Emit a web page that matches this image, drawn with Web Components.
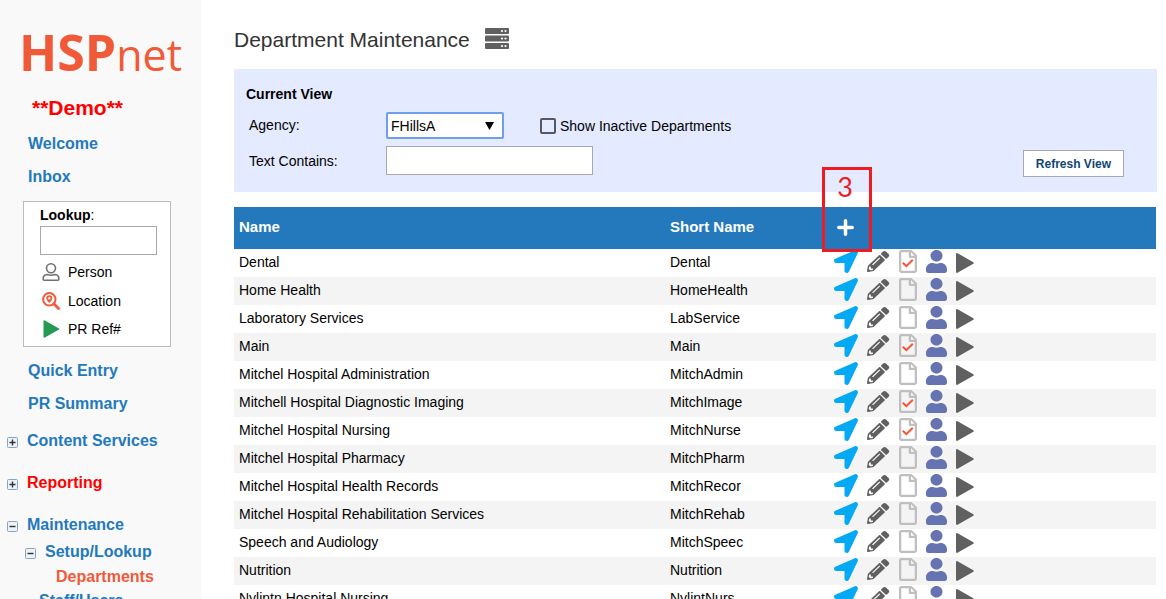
<!DOCTYPE html>
<html lang="en">
<head>
<meta charset="utf-8">
<title>Department Maintenance</title>
<style>
  body { margin: 0; font: 14px/20px "Liberation Sans", Arial, sans-serif; color: #000; background: #fff; }
</style>
</head>
<body>
<hsp-shell>
  <hsp-sidebar slot="side"></hsp-sidebar>
  <page-heading slot="main" icon="server">Department Maintenance</page-heading>
  <filter-panel slot="main"></filter-panel>
  <department-table slot="main"></department-table>
</hsp-shell>

<script>
const define = (name, html, setup) => customElements.define(name, class extends HTMLElement {
  connectedCallback() {
    if (this.shadowRoot) return;
    const root = this.attachShadow({ mode: "open" });
    const template = document.createElement("template");
    template.innerHTML = typeof html === "function" ? html(this) : html;
    root.append(template.content.cloneNode(true));
    if (setup) setup(this, root);
  }
});

const FILE = '<path fill="#bfbfbf" d="M369.9 97.9L286 14C277 5 264.8-.1 252.1-.1H48C21.5 0 0 21.5 0 48v416c0 26.5 21.5 48 48 48h288c26.5 0 48-21.5 48-48V131.9c0-12.7-5.1-25-14.1-34zM332.1 128H256V51.9l76.1 76.1zM48 464V48h160v104c0 13.3 10.7 24 24 24h104v288H48z"/>';
const ICONS = {
  arrow: [24, 23, "0 0 512 512", '<path fill="#03a9f4" d="M444.52 3.52L28.74 195.42c-47.97 22.39-31.98 92.75 19.19 92.75h175.91v175.91c0 51.17 70.36 67.17 92.75 19.19l191.9-415.78c15.99-38.39-25.59-79.97-63.97-63.95z"/>'],
  pencil: [23, 21, "0 0 530 512", '<path fill="#606060" d="M497.9 142.1l-46.1 46.1c-4.7 4.7-12.3 4.7-17 0l-111-111c-4.7-4.7-4.7-12.3 0-17l46.1-46.1c18.7-18.7 49.1-18.7 67.9 0l60.1 60.1c18.8 18.7 18.8 49.1 0 67.9zM284.2 99.8L21.6 362.4.4 483.9c-2.9 16.4 11.4 30.6 27.8 27.8l121.5-21.3 262.6-262.6c4.7-4.7 4.7-12.3 0-17l-111-111c-4.8-4.7-12.4-4.7-17.1 0zM124.1 339.9c-5.5-5.5-5.5-14.3 0-19.8l154-154c5.5-5.5 14.3-5.5 19.8 0s5.5 14.3 0 19.8l-154 154c-5.5 5.5-14.3 5.5-19.8 0zM88 424h48v36.3l-64.5 11.3-31.1-31.1L51.7 376H88v48z"/>'],
  file: [18, 23, "0 0 384 512", FILE],
  filecheck: [18, 23, "0 0 384 512", FILE + '<path d="M80 282l78 76 136-142" fill="none" stroke="#f4573a" stroke-width="44"/>'],
  user: [21, 23, "0 0 448 512", '<path fill="#6573b1" d="M224 256c70.7 0 128-57.3 128-128S294.7 0 224 0 96 57.3 96 128s57.3 128 128 128zm89.6 32h-16.7c-22.2 10.2-46.9 16-72.9 16s-50.6-5.8-72.9-16h-16.7C60.2 288 0 348.2 0 422.4V464c0 26.5 21.5 48 48 48h352c26.5 0 48-21.5 48-48v-41.6c0-74.2-60.2-134.4-134.4-134.4z"/>'],
  play: [18, 23, "0 -3 18 23", '<path fill="#606060" d="M1.600 0.200L17.300 9.200Q18.300 10 17.300 10.800L1.600 19.800Q0 20.200 0 18.800V1.200Q0-.2 1.600.2z"/>'],
  plus: [17, 17, "0 0 17 17", '<path d="M8.500 1.800v13.400M1.800 8.500h13.400" fill="none" stroke="#fff" stroke-width="3.500" stroke-linecap="round"/>'],
  server: [24, 21, "0 0 24 21", '<g fill="#606060"><rect width="24" height="6" rx="1"/><rect y="7.500" width="24" height="6" rx="1"/><rect y="15" width="24" height="6" rx="1"/></g><g fill="#fff"><circle cx="17" cy="3" r="1.100"/><circle cx="20.500" cy="3" r="1.100"/><circle cx="17" cy="10.500" r="1.100"/><circle cx="20.500" cy="10.500" r="1.100"/><circle cx="17" cy="18" r="1.100"/><circle cx="20.500" cy="18" r="1.100"/></g>'],
  person: [18, 18, "0 0 18 18", '<g fill="none" stroke="#707070" stroke-width="1.600"><circle cx="9" cy="5.300" r="4.500"/><path d="M5 11.500Q9 13 13 11.500Q16.800 11.800 16.800 15.500V16.200Q16.800 17.200 15.800 17.200H2.200Q1.200 17.200 1.200 16.200V15.500Q1.200 11.800 5 11.500z"/></g>'],
  locate: [18, 18, "0 0 18 18", '<circle cx="7.300" cy="7.300" r="6.200" fill="none" stroke="#f15a3a" stroke-width="2"/><path d="M11.800 11.800L16.500 16.500" stroke="#f15a3a" stroke-width="2.800" stroke-linecap="round"/><path fill="#f15a3a" fill-rule="evenodd" d="M7.300 3.300a3 3 0 0 1 3 3c0 1.600-1.800 3.300-3 4.800c-1.200-1.500-3-3.200-3-4.800a3 3 0 0 1 3-3zm0 1.800a1.200 1.200 0 1 0 0 2.400a1.200 1.200 0 0 0 0-2.400z"/>'],
  ref: [18, 18, "-1 0 18 18", '<path fill="#249b54" d="M1.500.3L16 8.400Q16.800 9 16 9.600L1.500 17.700Q.5 18 .5 17V1Q.5 0 1.500.3z"/>'],
  expand: [11, 11, "0 0 11 11", '<rect x=".5" y=".5" width="10" height="10" rx="1" fill="#eef1f5" stroke="#84a4c8"/><path d="M2.500 5.500h6M5.500 2.500v6" stroke="#333" stroke-width="1.400"/>'],
  collapse: [11, 11, "0 0 11 11", '<rect x=".5" y=".5" width="10" height="10" rx="1" fill="#eef1f5" stroke="#84a4c8"/><path d="M2.500 5.500h6" stroke="#333" stroke-width="1.400"/>'],
  caret: [9, 8, "0 0 9 8", '<path d="M0 0h9L4.500 8z"/>']
};

define("ui-icon", el => {
  const [w, h, box, body] = ICONS[el.getAttribute("name")];
  return `<style>:host{display:block;flex:none}svg{display:block}</style>
    <svg width="${w}" height="${h}" viewBox="${box}" preserveAspectRatio="none" aria-hidden="true">${body}</svg>`;
});

define("hsp-shell", `
  <style>
    :host { display: flex; height: 100vh; overflow: hidden; }
    aside { flex: none; width: 201px; background: #f9f9f9; overflow: hidden auto; scrollbar-width: none; }
    main { flex: 1; min-width: 0; padding: 0 9px 0 33px; overflow: hidden auto; scrollbar-width: none; }
  </style>
  <aside><slot name="side"></slot></aside>
  <main><slot name="main"></slot></main>`);

define("hsp-logo", `
  <style>:host{display:block} svg{display:block} text{fill:#f15a38}</style>
  <svg width="164" height="56" viewBox="0 0 164 56" role="img" aria-label="HSPnet">
    <text x="-3" y="51" font-family="Open Sans, sans-serif" font-size="43"><tspan font-weight="bold" font-size="50">HSP</tspan>net</text>
  </svg>`);

define("nav-item", el => {
  const toggle = el.getAttribute("toggle");
  return `
  <style>
    :host { display: flex; align-items: center; height: 33px; padding-left: 28px; font-size: 16px; font-weight: bold; }
    :host([level="1"]) { height: 28px; padding-left: 7px; margin-bottom: 14px; }
    :host([level="1"][open]) { margin-bottom: 0; }
    :host([level="2"]) { height: 26px; padding-left: 25px; }
    :host([level="3"]) { height: 24px; padding-left: 56px; }
    :host([level="users"]) { height: 24px; padding-left: 39px; }
    a { color: #2379bb; text-decoration: none; }
    :host([tone="alert"]) a { color: #f00; }
    :host([tone="current"]) a { color: #f15a38; }
    button { flex: none; border: 0; padding: 2px 0 0; margin-right: 9px; background: none; }
  </style>
  ${toggle ? `<button type="button" aria-label="${toggle}"><ui-icon name="${toggle}"></ui-icon></button>` : ""}
  <a href="#"><slot></slot></a>`;
});

define("lookup-box", `
  <style>
    :host { display: block; box-sizing: border-box; width: 148px; height: 146px; margin: 8px 0 7px 23px; padding: 3px 13px 0 16px; background: #fff; border: 1px solid #bbb; }
    label { display: block; height: 21px; }
    input { display: block; box-sizing: border-box; width: 100%; height: 29px; border: 1px solid #a9a9a9; padding: 0 4px; font: inherit; background: #fff; }
    ul { list-style: none; margin: 2px 0 0; padding: 0; }
    a { display: flex; align-items: center; gap: 8px; height: 29px; padding-left: 2px; color: #000; text-decoration: none; }
    li:last-child a { height: 27px; }
  </style>
  <label for="q"><b>Lookup</b>:</label>
  <input id="q" type="text">
  <ul>
    <li><a href="#"><ui-icon name="person"></ui-icon>Person</a></li>
    <li><a href="#"><ui-icon name="locate"></ui-icon>Location</a></li>
    <li><a href="#"><ui-icon name="ref"></ui-icon>PR Ref#</a></li>
  </ul>`);

define("hsp-sidebar", `
  <style>
    :host { display: block; }
    hsp-logo { padding: 20px 0 0 22px; }
    h2 { margin: 0; padding: 20px 0 7px 32px; font-size: 21px; line-height: 24px; color: #f00; }
    .tree { padding-top: 7px; }
  </style>
  <hsp-logo></hsp-logo>
  <h2>**Demo**</h2>
  <nav>
    <nav-item>Welcome</nav-item>
    <nav-item>Inbox</nav-item>
    <lookup-box></lookup-box>
    <nav-item>Quick Entry</nav-item>
    <nav-item>PR Summary</nav-item>
    <div class="tree">
      <nav-item level="1" toggle="expand">Content Services</nav-item>
      <nav-item level="1" toggle="expand" tone="alert">Reporting</nav-item>
      <nav-item level="1" toggle="collapse" open>Maintenance</nav-item>
      <nav-item level="2" toggle="collapse">Setup/Lookup</nav-item>
      <nav-item level="3" tone="current">Departments</nav-item>
      <nav-item level="users">Staff/Users</nav-item>
    </div>
  </nav>`);

define("page-heading", el => `
  <style>
    :host { display: flex; align-items: center; gap: 15px; height: 69px; padding-top: 8px; box-sizing: border-box; }
    h1 { margin: 0; padding-top: 2px; font-size: 21px; line-height: 28px; font-weight: normal; color: #333; }
  </style>
  <h1><slot></slot></h1><ui-icon name="${el.getAttribute("icon")}"></ui-icon>`);

define("filter-panel", `
  <style>
    :host { display: block; margin-bottom: 15px; padding: 15px 33px 15px 12px; background: #e4eaff; }
    h2 { margin: 0 0 8px; font-size: 14px; line-height: 20px; }
    .row { display: flex; align-items: center; padding-left: 3px; }
    .row + .row { margin-top: 7px; }
    .caption { flex: none; width: 137px; padding-bottom: 2px; }
    .pick { display: grid; align-items: center; width: 118px; margin-right: 36px; }
    .pick > * { grid-area: 1 / 1; }
    .pick ui-icon { justify-self: end; margin-right: 10px; pointer-events: none; }
    select { appearance: none; width: 100%; height: 27px; padding: 0 3px; border: 2px solid #6f9fe8; border-radius: 2px; background: #fff; color: #000; font: inherit; }
    input[type=text] { align-self: flex-start; box-sizing: border-box; width: 207px; height: 29px; border: 1px solid #a9a9a9; padding: 0 4px; font: inherit; background: #fff; }
    input[type=checkbox] { appearance: none; box-sizing: border-box; width: 16px; height: 16px; margin: 0 4px 0 0; border: 2px solid #5a5560; border-radius: 2px; }
    .check { display: flex; align-items: center; }
    button { height: 27px; margin: 4px 0 0 auto; padding: 0 12px; border: 1px solid #a9a9a9; background: #fff; color: #0f4673; font: bold 12px/20px "Liberation Sans", Arial, sans-serif; }
  </style>
  <h2>Current View</h2>
  <div class="row">
    <label class="caption" for="agency">Agency:</label>
    <div class="pick"><select id="agency"><option>FHillsA</option></select><ui-icon name="caret"></ui-icon></div>
    <div class="check"><input type="checkbox" id="inactive"><label for="inactive">Show Inactive Departments</label></div>
  </div>
  <div class="row">
    <label class="caption" for="contains">Text Contains:</label>
    <input type="text" id="contains">
    <button type="button">Refresh View</button>
  </div>`);

define("step-marker", `
  <style>
    :host { display: block; box-sizing: border-box; width: 50px; height: 85px; border: 3px solid #ed1c24; text-align: center; color: #ed1c24; font: 27px/34px Lato, sans-serif; pointer-events: none; padding-right: 4px; }
  </style><slot></slot>`);

define("department-table", `
  <style>
    :host { display: block; padding-right: 1px; }
    table { width: 100%; border-collapse: collapse; table-layout: fixed; }
    .name { width: 431px; } .short { width: 169px; }
    th { box-sizing: border-box; height: 42px; padding: 0 0 2px 5px; background: #2379bb; color: #fff; text-align: left; font-size: 15px; }
    td { box-sizing: border-box; height: 28px; padding: 0 0 2px 5px; }
    th:last-child { position: relative; padding-left: 0; }
    td:last-child { padding: 0; }
    tbody tr:nth-child(even) { background: #f4f4f4; }
    .actions { display: flex; align-items: center; gap: 9px; height: 25px; margin-bottom: 3px; }
    button { display: block; border: 0; padding: 0; background: none; }
    th button { margin-left: 3px; }
    step-marker { position: absolute; left: -12px; top: -40px; z-index: 1; }
  </style>
  <table>
    <colgroup><col class="name"><col class="short"><col></colgroup>
    <thead><tr><th>Name</th><th>Short Name</th><th><button type="button" aria-label="Add department"><ui-icon name="plus"></ui-icon></button><step-marker>3</step-marker></th></tr></thead>
    <tbody></tbody>
  </table>`, (el, root) => {
  const rows = [
    ["Dental", "Dental", 1], ["Home Health", "HomeHealth"], ["Laboratory Services", "LabService"],
    ["Main", "Main", 1], ["Mitchel Hospital Administration", "MitchAdmin"],
    ["Mitchell Hospital Diagnostic Imaging", "MitchImage", 1], ["Mitchel Hospital Nursing", "MitchNurse", 1],
    ["Mitchel Hospital Pharmacy", "MitchPharm"], ["Mitchel Hospital Health Records", "MitchRecor"],
    ["Mitchel Hospital Rehabilitation Services", "MitchRehab"], ["Speech and Audiology", "MitchSpeec"],
    ["Nutrition", "Nutrition"], ["Nylintn Hospital Nursing", "NylintNurs"]
  ];
  const action = (icon, label) => `<button type="button" aria-label="${label}"><ui-icon name="${icon}"></ui-icon></button>`;
  root.querySelector("tbody").innerHTML = rows.map(([name, short, checked]) => `
    <tr><td>${name}</td><td>${short}</td><td><div class="actions">
      ${action("arrow", "Destinations")}${action("pencil", "Edit")}${action(checked ? "filecheck" : "file", "Document")}${action("user", "Contacts")}${action("play", "Open")}
    </div></td></tr>`).join("");
});
</script>
</body>
</html>
